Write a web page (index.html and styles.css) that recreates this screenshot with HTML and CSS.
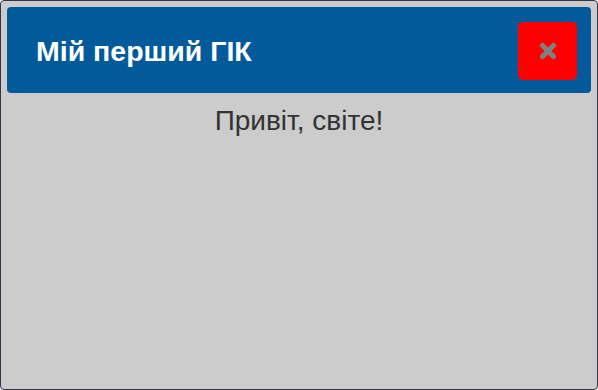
FILE: index.html
```html
<!DOCTYPE html>
<html lang="uk">
<head>
<meta charset="utf-8">
<title>Мій перший ГІК</title>
<link rel="stylesheet" href="styles.css">
</head>
<body>
<div class="window">
  <header class="titlebar">
    <h1 class="title">Мій перший ГІК</h1>
    <button class="close" type="button" aria-label="Закрити">
      <svg width="18" height="18" viewBox="0 0 18 18"><path d="M3.5 3.5 L14.5 14.5 M14.5 3.5 L3.5 14.5" stroke="#808080" stroke-width="5" stroke-linecap="round"/></svg>
    </button>
  </header>
  <p class="message">Привіт, світе!</p>
</div>
</body>
</html>
```
FILE: styles.css
```css
html, body {
  margin: 0;
  padding: 0;
}
body {
  width: 598px;
  height: 390px;
  font-family: "Liberation Sans", Arial, sans-serif;
}
.window {
  box-sizing: border-box;
  width: 598px;
  height: 390px;
  border: 1px solid #34344f;
  border-radius: 4px;
  background: #cccccc;
  padding: 6px;
}
.titlebar {
  display: flex;
  align-items: center;
  justify-content: space-between;
  height: 86px;
  box-sizing: border-box;
  background: #025a9b;
  border-radius: 4px;
  padding: 0 14px 0 29px;
}
.title {
  margin: 2px 0 0;
  color: #ffffff;
  font-size: 28.5px;
  font-weight: bold;
}
.close {
  width: 59px;
  height: 58px;
  margin-top: 2px;
  border: none;
  border-radius: 5px;
  background: #ff0000;
  display: flex;
  align-items: center;
  justify-content: center;
  padding: 0;
}
.close svg {
  display: block;
}
.message {
  margin: 12px 0 0;
  text-align: center;
  color: #333333;
  font-size: 28px;
}
```
